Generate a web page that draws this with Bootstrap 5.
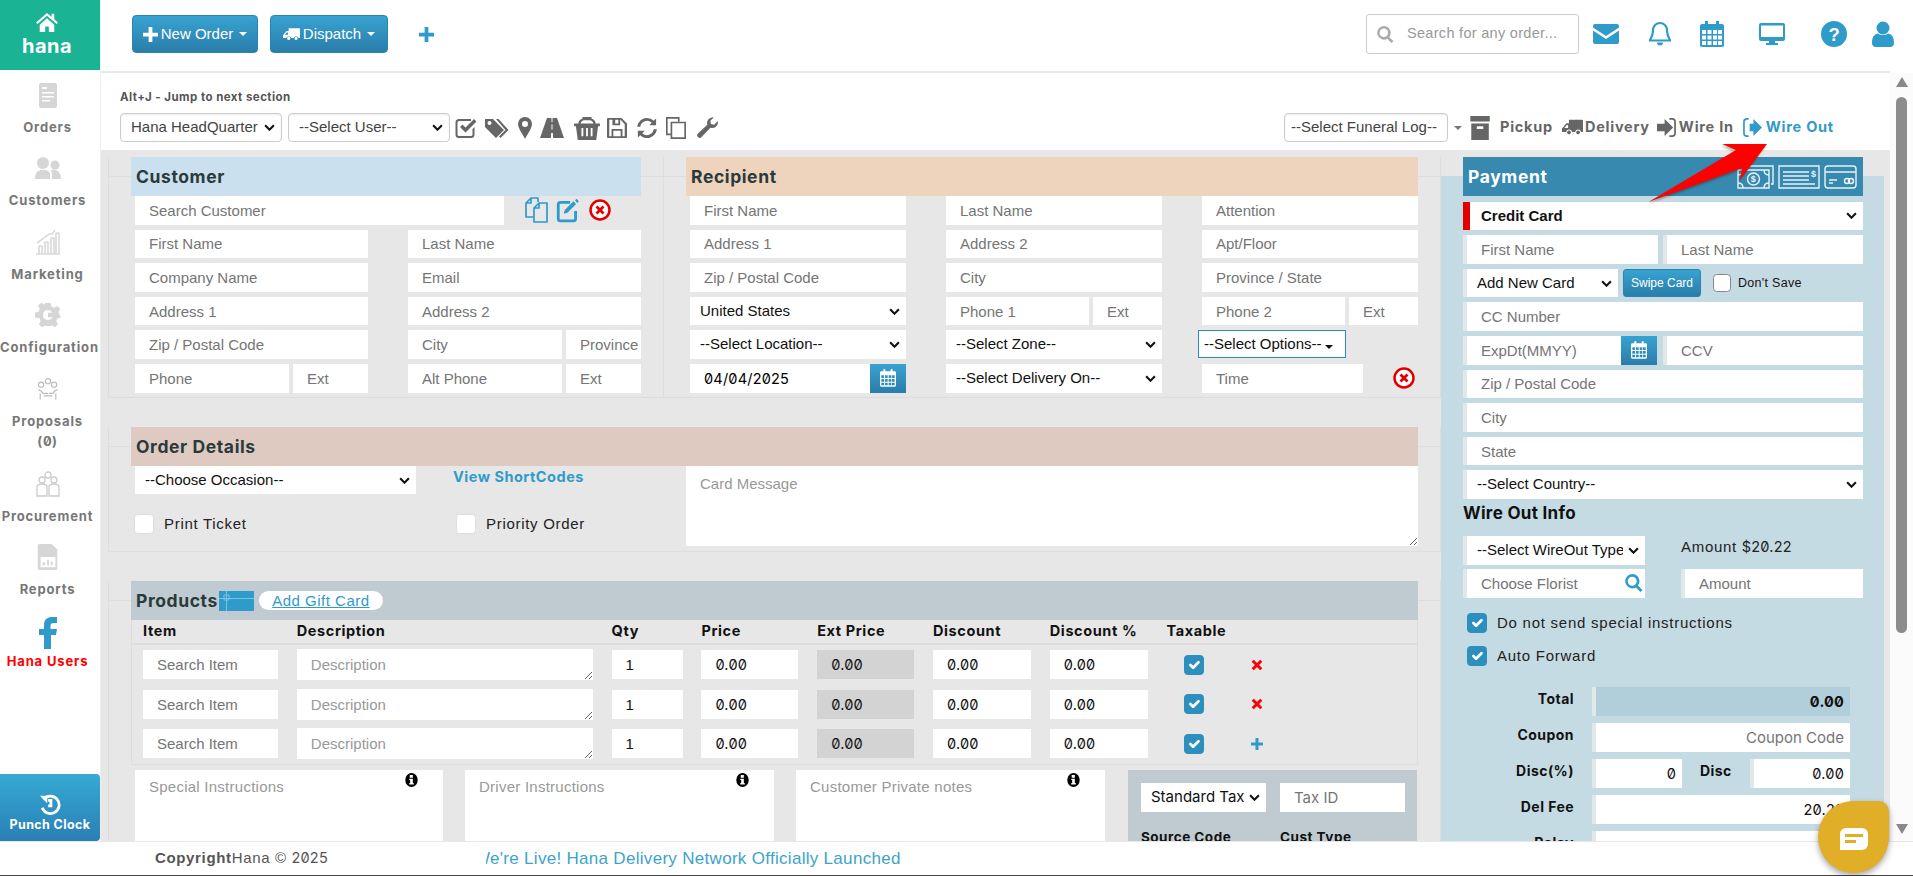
<!DOCTYPE html>
<html lang="en"><head><meta charset="utf-8"><title>Hana</title>
<link href="https://cdn.jsdelivr.net/npm/bootstrap@5.3.0/dist/css/bootstrap.min.css" rel="stylesheet">
<style>
html,body{height:876px;overflow:hidden}
body{font-family:"Liberation Sans",Arial,sans-serif;font-size:15px;letter-spacing:0;color:#222;background:#fff;position:relative}
.shell{height:841px}
.sbar{width:101px;flex:none;border-right:1px solid #eee}
.brand{height:70px;background:#1ab394;color:#fff;font:700 20px/1 Inter,sans-serif;letter-spacing:.5px;padding-top:12px}
.brand svg{width:22px;height:20px;fill:#fff;display:block;margin:0 auto 4px}
.snav{width:95px;text-align:center;font:700 13px/1 Inter,sans-serif;letter-spacing:.85px;color:#777;padding-top:12px}
.brand{width:100px;padding-right:6px}
.sitem{display:block;height:73.4px;white-space:nowrap}
.sitem svg{width:26px;height:26px;display:block;margin:0 auto 10px;fill:#d6d6d6}
.sitem.two{height:95px}
.sitem.fb{color:#f00;height:64px}
.sitem.fb svg{width:24px;height:32px;fill:#2f9bcb;margin-bottom:3px}
.sitem span{display:block;line-height:21px;margin-top:-1px}
.sitem span span{margin:0}
.punch{width:100px;height:67px;margin-top:auto;background:linear-gradient(#35aad4,#2a7fb4);border-radius:0 4px 4px 0;color:#fff;font:700 12.5px/1 Inter,sans-serif;letter-spacing:.4px;text-align:center;padding:9px 0 0;border:0;white-space:nowrap}
.punch:hover{color:#fff}
.punch svg{width:22px;height:24px;display:block;margin:0 auto 2px;fill:none;stroke:#fff;stroke-width:3}
.topb{height:71px;padding:0 8px 3px 31px}
.topline{height:2px;width:1789px;background:#e7eaec}
.tbtn{height:38px;background:linear-gradient(#38a3d2,#2a7da9);border:1px solid #2a84af;border-radius:4px;color:#fff;font-size:15px;letter-spacing:0;padding:0;display:flex;align-items:center;justify-content:center;gap:3px}
.tbtn:hover{color:#fff}
.tbtn svg{width:15px;height:15px;fill:#fff}
.w126{width:126px}.w118{width:118px;margin-left:12px}
.car{display:inline-block;border-top:4px solid currentColor;border-left:4px solid transparent;border-right:4px solid transparent;margin-left:3px}
.plus{width:15px;height:15px;fill:#2f9bcb;margin-left:31px}
.osearch{width:213px;height:40px;margin-left:auto;border:1px solid #ccc;border-radius:3px;padding-left:10px;color:#999;font-size:14.5px;letter-spacing:.3px}
.osearch svg{width:17px;height:17px;fill:#aaa;margin-right:13px}
.ticons{display:grid;grid-template-columns:54px 54px 50px 70px 54px 44px;justify-items:center;align-items:center}
.ticons svg{width:26px;height:26px;fill:#2f9bcb}
.scol{width:23px;flex:none;background:#fbfbfb;padding:4px 6px 7px}
.sthumb{background:#8c8c8c;border-radius:7px;height:536px;margin:10px 0 auto}
.tri-u,.tri-d{display:block;width:0;height:0;border-left:6.5px solid transparent;border-right:6.5px solid transparent}
.tri-u{border-bottom:10px solid #888}.tri-d{border-top:10px solid #888}
.subb{height:77px;padding:18px 0 0 19px}
.altj{font:700 11.5px/13px Inter,sans-serif;color:#555;letter-spacing:.45px;margin-bottom:9px}
.form-select.tsel,.form-select.fs{--bs-form-select-bg-img:url("data:image/svg+xml,%3csvg xmlns='http://www.w3.org/2000/svg' viewBox='0 0 12 8'%3e%3cpath fill='none' stroke='%23111' stroke-width='2.4' d='M1 1.500l5 5 5-5'/%3e%3c/svg%3e");background-size:11px 7px;background-position:right 6px center}
.tsel{height:29px;border:1px solid #ccc;border-radius:4px;padding:0 20px 0 10px;font-size:15px;letter-spacing:0;color:#444;box-shadow:inset 0 1px 2px rgba(0,0,0,.08)}
.form-select.nochev{--bs-form-select-bg-img:none;padding:0 0 0 6px}
.w162{width:162px}.w162b{width:162px;margin-left:6px}
.gi{fill:#666;flex:none}
.tact{font:700 14.5px/1 Inter,sans-serif;color:#666;letter-spacing:.75px;white-space:nowrap}
.tact.on{color:#2f9bcb}
.farea{background:#e7e7e7;height:691px;padding:7px 0 0 7px;overflow:hidden}
.lcol{width:1333px;flex:none}
.paycol{width:443px;flex:none;padding:0 21px 0 22px;background:linear-gradient(transparent 19px,#c5dbe3 19px)}
.sect{border:1px solid #ddd;border-top:0;background:linear-gradient(#ddd,#ddd) top 19px left/100% 1px no-repeat}
.sc{width:555px;height:241px;padding:0 22px;border-right:0}
.sr{width:778px;height:241px;padding:0 22px;}
.sh{height:39px;font:700 17.5px/39px Inter,sans-serif;letter-spacing:.6px;padding-left:5px;color:#2a3a3a}
.hc{background:#cbe0ee}.hr{background:#eed3bd}.ho{background:#dfcac2}.hp{background:#bfcbd0}
.hpay{background:#3789af;color:#fff;margin-bottom:5.6px}
.fg{display:grid;row-gap:5px;padding-left:4px;grid-auto-rows:28.6px}
.g2{grid-template-columns:233px 233px;column-gap:40px}
.g3{grid-template-columns:216px 216px 216px;column-gap:40px}
.s2{grid-column:span 2}
.splt{display:flex;gap:4px;min-width:0}
.splt .fi{min-width:0}
.fi,.fs{border:0;border-radius:0;height:100%;font-size:15px;letter-spacing:0;color:#111;background-color:#fff;box-shadow:none}
.fi{padding:0 0 0 14px}
.fi::placeholder{color:#757575;opacity:1}
.fs{padding:0 22px 0 10px}
.z{font-family:Inter,sans-serif;font-feature-settings:"zero";letter-spacing:.2px;font-size:14.5px}
.optbtn{height:28px;width:148px;margin-left:-4px;background:#fff;border:1px solid #2a8fc0;font-size:15px;letter-spacing:0;color:#111;padding:0 0 0 5px;text-align:left;white-space:nowrap}
.calb{flex:none;background:linear-gradient(#38a3d2,#2a7da9);display:flex;align-items:center;justify-content:center;width:36px}
.calb svg{width:16px;height:18px;fill:#fff}
.ci{width:24px;height:26px}
.c-x{width:22px;height:22px}
.secgap{margin-top:29px}
.so{height:125px;padding:0 22px}
.occ{width:555px;flex:none;padding-left:4px}
.occg{display:grid;grid-template-columns:318px 1fr}
.lnk{font:700 14.5px/1 Inter,sans-serif;color:#2f9bcb;letter-spacing:.5px;padding-top:4px;text-decoration:none;display:block}
.chk{width:20px;height:20px;margin:0 10px 0 -1px;border-radius:3px;border:1px solid #ddd;background-color:#fff;flex:none}
.chk:checked{background-color:#2c8fbe;border-color:#2c8fbe}
.lsp{letter-spacing:.7px;color:#222}
.cmsg{width:732px;height:80px;border:0;border-radius:0;padding:7px 14px;font-size:15px;letter-spacing:0}
.cmsg::placeholder{color:#999;opacity:1}
.sp{padding:0 22px;height:600px;margin-top:29px}
.gcard{width:35px;height:20px;margin-left:1px;flex:none}
.pill{width:124px;height:19px;margin-left:5px;background:#fff;border-radius:10px;text-align:center;color:#2f9bcb;text-decoration:underline;font:400 15px/19px "Liberation Sans",sans-serif;letter-spacing:.5px}
.ptab{border:1px solid #ddd;border-top:0;height:144.5px}
.prow{display:grid;grid-template-columns:135px 296px 71px 97px 97px 98px 98px 60px 24px;column-gap:18.8px;padding-left:11px;align-items:center;height:39.5px}
.phead{height:25px;border-bottom:2px solid #ddd;font:700 14.5px/1 Inter,sans-serif;letter-spacing:.6px;color:#111}
.phead span{white-space:nowrap}
.prow .fi{height:29px}
.prow textarea.fi{height:31px;min-height:0;padding-top:5px;padding-left:14px}
.prow textarea.fi::placeholder{color:#999}
.ext{background:#d3d3d3!important}
.pchk{justify-self:center;margin:0 0 0 -6px}
.ic-s{width:12px;height:12px;margin-left:6px}
.nrow{margin-top:5.5px;padding-left:4px;display:grid;grid-template-columns:308px 309px 309px 290px;column-gap:22px}
.nbox{position:relative;background:#fff;height:120px;padding:6px 14px;color:#999;letter-spacing:.25px}
.nbox svg{position:absolute;right:24px;top:2px;width:15px;height:16px}
.graybox{background:#bfcbd0;height:120px;padding:13px 13px;display:grid;grid-template-columns:125px 125px;column-gap:14px;grid-template-rows:29px 20px;row-gap:19px;font:700 13.5px/1 Inter,sans-serif;letter-spacing:.5px;color:#111;margin-left:1px}
.phd{display:flex;align-items:center;justify-content:space-between;padding-right:6px}
.phd svg{fill:none;stroke:#e8f4f8;stroke-width:1.4}
.phd svg text{fill:#e8f4f8;stroke:none;font:700 9px "Liberation Sans",sans-serif}
.pg{display:grid;grid-auto-rows:28.6px;row-gap:5px;width:400px}
.pf{border-left:4px solid #e2e8ea!important}
.ccs{border-left:7px solid #e50000!important;font-weight:700;padding-left:11px}
.pr2{display:grid;grid-template-columns:195px 200px;column-gap:5px}
.swp{width:78px;height:28px;background:linear-gradient(#38a3d2,#2a7da9);border:1px solid #2a84af;color:#fff;font-size:12px;letter-spacing:0;padding:0;border-radius:3px;margin:0 0 0 5px;flex:none}
.swp:hover{color:#fff}
.chk.pchk2{width:18px;height:18px;margin:0 7px 0 12px;border-color:#888}
.wi{font:700 17px/1 Inter,sans-serif;color:#111;letter-spacing:.3px;padding:6px 0 0;height:37px}
.wg{display:grid;grid-template-columns:182px 182px;column-gap:36px;grid-auto-rows:29px;row-gap:4.5px}
.wsel{width:182px}
.wcb{padding-left:4px;height:32px;color:#222;letter-spacing:.75px}
.wcb .chk{margin:0 10px 0 0}
.totg{display:grid;grid-template-columns:111px 258px;column-gap:18px;grid-auto-rows:29px;row-gap:7px;margin-top:15px;font:700 14px/24px Inter,sans-serif;letter-spacing:.45px;color:#111;text-align:right}
.ti2{padding:0 6px 0 0;text-align:right}
.tot{background:#b1cfda!important;font-weight:700}
.dsplit{display:grid;grid-template-columns:90px 68px 100px;text-align:left}
.dsplit span{padding-left:18px}
.foot{height:35px;border-top:1px solid #e7e7e7;border-bottom:1px solid #444;background:#fff;padding-left:155px;color:#555;letter-spacing:.65px}
.foot b{font-weight:700;color:#555}
.mq{width:440px;overflow:hidden;white-space:nowrap;color:#3da3cb;font-size:17px;letter-spacing:.3px}
.mq span{display:inline-block;margin-left:-12px}
.chatb{position:absolute;left:1818px;top:801px;width:71px;height:72px;background:#e0ae27;border-radius:50% 14% 50% 50%;box-shadow:0 3px 6px rgba(0,0,0,.35);display:flex;align-items:center;justify-content:center}
.chatb svg{width:28px;height:22px;margin-top:4px}
.redarrow{position:absolute;left:1640px;top:138px;width:135px;height:72px}
</style></head>
<body>
<svg width="0" height="0" class="d-none"><defs>
<symbol id="i-home" viewBox="0 0 24 22"><path d="M12 1 0 11.500l1.500 1.700L12 4l10.500 9.200L24 11.500l-4-3.500V2h-3v3.400zM4 14v8h6v-6h4v6h6v-8l-8-7z"/></symbol>
<symbol id="i-plus" viewBox="0 0 16 16"><path d="M6 0h4v6h6v4h-6v6H6v-6H0V6h6z"/></symbol>
<symbol id="i-truck" viewBox="0 0 24 20"><path d="M8 1h15a1 1 0 0 1 1 1v13h-2.200a3.500 3.500 0 0 0-6.800 0H11.500a3.500 3.500 0 0 0-6.800 0H0v-4l5-6h3zM2.500 10.500H7V7H5.500zM5.800 15.500a2.200 2.200 0 1 1 0 .1zM16.200 15.500a2.200 2.200 0 1 1 0 .1z"/></symbol>
<symbol id="i-search" viewBox="0 0 20 20"><path fill-rule="evenodd" d="M8 0a8 8 0 0 1 6.400 12.800l5 5-2.300 2.200-5-5A8 8 0 1 1 8 0zm0 3a5 5 0 1 0 0 10A5 5 0 0 0 8 3z"/></symbol>
<symbol id="i-env" viewBox="0 0 26 22"><path d="M2 1h22a2 2 0 0 1 2 2v1.500L13 13 0 4.500V3a2 2 0 0 1 2-2zM0 7.500 13 16 26 7.500V19a2 2 0 0 1-2 2H2a2 2 0 0 1-2-2z"/></symbol>
<symbol id="i-bell" viewBox="0 0 24 26"><path fill="none" stroke="currentColor" stroke-width="2.200" d="M12 2a7 7 0 0 1 7 7c0 7 3 9 3 10.500H2C2 18 5 16 5 9a7 7 0 0 1 7-7z"/><path d="M9 21.500h6a3 3 0 0 1-6 0z"/></symbol>
<symbol id="i-cal" viewBox="0 0 24 26"><path fill-rule="evenodd" d="M5 0h3v3h8V0h3v3h3a2 2 0 0 1 2 2v19a2 2 0 0 1-2 2H2a2 2 0 0 1-2-2V5a2 2 0 0 1 2-2h3zM2 9v4h4V9zm5.500 0v4h4V9zm5.500 0v4h4V9zm5 0v4h4V9zM2 14.500v4h4v-4zm5.500 0v4h4v-4zm5.500 0v4h4v-4zm5 0v4h4v-4zM2 20v4h4v-4zm5.500 0v4h4v-4zm5.500 0v4h4v-4zm5 0v4h4v-4z"/></symbol>
<symbol id="i-mon" viewBox="0 0 26 24"><path fill-rule="evenodd" d="M2 1h22a2 2 0 0 1 2 2v14a2 2 0 0 1-2 2h-8v2h3v2H7v-2h3v-2H2a2 2 0 0 1-2-2V3a2 2 0 0 1 2-2zm0 2.500V15h22V3.500z"/></symbol>
<symbol id="i-q" viewBox="0 0 24 24"><circle cx="12" cy="12" r="12"/><text x="12" y="18" text-anchor="middle" font-family="Liberation Sans" font-weight="700" font-size="17" fill="#fff">?</text></symbol>
<symbol id="i-user" viewBox="0 0 22 26"><circle cx="11" cy="7" r="6.500"/><path d="M0 22c0-7 3-9 6-9.500 3 2 7 2 10 0 3 .5 6 2.500 6 9.500a4 4 0 0 1-4 4H4a4 4 0 0 1-4-4z"/></symbol>
<symbol id="i-check" viewBox="0 0 22 22"><path d="M4 2h12v2H4a1.500 1.500 0 0 0-1.500 1.500v12A1.500 1.500 0 0 0 4 19h12a1.500 1.500 0 0 0 1.500-1.500V12l2-2v7.500A3.500 3.500 0 0 1 16 21H4a3.500 3.500 0 0 1-3.500-3.500v-12A3.500 3.500 0 0 1 4 2z"/><path d="m5 10 2.500-2.500 3 3L19 2l2.500 2.500-11 11z"/></symbol>
<symbol id="i-tags" viewBox="0 0 24 22"><path fill-rule="evenodd" d="M0 2v8l11 11 8-8L8 2zm4.500 2a2 2 0 1 1 0 4 2 2 0 0 1 0-4z"/><path d="M11 2h2.500l10 11-8 8-1.500-1.500 6.500-6.500z"/></symbol>
<symbol id="i-pin" viewBox="0 0 14 22"><path fill-rule="evenodd" d="M7 0a7 7 0 0 1 7 7c0 4-5 11-7 15C5 18 0 11 0 7a7 7 0 0 1 7-7zm0 4a3 3 0 1 0 0 6 3 3 0 0 0 0-6z"/></symbol>
<symbol id="i-road" viewBox="0 0 24 20"><path fill-rule="evenodd" d="M7 0h4.500v4h1V0H17l7 20h-11v-5h-2v5H0zm4.500 6.500v5h1v-5z"/></symbol>
<symbol id="i-bask" viewBox="0 0 28 26"><path fill-rule="evenodd" d="M9 1h10v2h-1c3 0 5 2 5.500 5H28v3h-2l-2 15H4L2 11H0V8h4.500C5 5 7 3 10 3H9zM7 8h14c-.5-2-2-3.500-4-3.500h-6C9 4.500 7.500 6 7 8zm1 5v9h2v-9zm5 0v9h2v-9zm5 0v9h2v-9z"/></symbol>
<symbol id="i-save" viewBox="0 0 22 24"><path fill-rule="evenodd" d="M2 1h14l6 6v15a1 1 0 0 1-1 1H1a1 1 0 0 1-1-1V2a1 1 0 0 1 1-1zm.500 2v18H5v-8h12v8h2.500V8L15 3h-.5v6H6V3zM7 15v6h8v-6zm2-12v4h3.500V3z"/></symbol>
<symbol id="i-ref" viewBox="0 0 22 22"><path d="M11 0a11 11 0 0 1 7.500 3L21 .5V8h-7.500l2.700-2.700A7.500 7.500 0 0 0 3.600 9.500H.1A11 11 0 0 1 11 0zM.9 14H8.500l-2.700 2.700a7.500 7.500 0 0 0 12.600-4.200h3.500A11 11 0 0 1 3.500 19L1 21.500z"/></symbol>
<symbol id="i-copy" viewBox="0 0 22 24"><path fill="none" stroke="currentColor" stroke-width="1.800" d="M5 19H1V1h13v4M6 6h15v17H6z"/></symbol>
<symbol id="i-wr" viewBox="0 0 22 22"><path d="M22 5.500a6 6 0 0 1-8 5.700L4.800 21a2.600 2.600 0 0 1-3.800-3.800l9.800-9.200A6 6 0 0 1 17.500.4L14 4l.6 3.400 3.400.6 3.500-3.500c.3 0 .5.400.5 1z"/></symbol>
<symbol id="i-box" viewBox="0 0 22 26"><path fill-rule="evenodd" d="M0 0h21v6H0zM1 8h19v18H1zm6 3v3h7v-3z"/></symbol>
<symbol id="i-in" viewBox="0 0 20 20"><path d="M0 6h8V1l9 9-9 9v-5H0z"/><path fill="none" stroke="currentColor" stroke-width="1.800" d="M13 1h3a3 3 0 0 1 3 3v12a3 3 0 0 1-3 3h-3"/></symbol>
<symbol id="i-out" viewBox="0 0 20 20"><path d="M7 6h4V1l9 9-9 9v-5H7z"/><path fill="none" stroke="currentColor" stroke-width="1.800" d="M6 1H4a3 3 0 0 0-3 3v12a3 3 0 0 0 3 3h2"/></symbol>
<symbol id="i-info" viewBox="0 0 16 18"><ellipse cx="8" cy="9" rx="7" ry="8"/><path fill="#fff" d="M6 3.500h3.500v3H6zM5.500 7.500h4v5h1V14h-5v-1.500h1V9h-1z"/></symbol>
<symbol id="i-tick" viewBox="0 0 24 26"><path fill="none" stroke="#2f9bcb" stroke-width="1.700" stroke-linejoin="round" d="M14 5V1H7L2 6v14h8M7 1v5H2M15 6h8v19H10V11zM15 6v5h-5"/></symbol>
</defs></svg>

<div class="shell d-flex">
 <aside class="sbar d-flex flex-column">
  <div class="brand text-center"><svg><use href="#i-home"/></svg>hana</div>
  <nav class="snav">
   <a class="sitem text-reset text-decoration-none"><svg viewBox="0 0 24 26"><path fill-rule="evenodd" d="M5 1h14a2 2 0 0 1 2 2v21a2 2 0 0 1-2 2H5a2 2 0 0 1-2-2V3a2 2 0 0 1 2-2zm1 4v2h5V5zm0 5v1.500h12V10zm0 4v1.500h12V14zm0 4v1.500h8V18z"/></svg><span>Orders</span></a>
   <a class="sitem text-reset text-decoration-none"><svg viewBox="0 0 26 24"><circle cx="8" cy="7" r="6"/><circle cx="20" cy="9" r="4.500"/><path d="M0 23c0-7 3-9 8-9s7 2 7 4v5zM17 23v-6c0-1-1-2-1.500-2.500C20 12.500 26 15 26 23z"/></svg><span>Customers</span></a>
   <a class="sitem text-reset text-decoration-none"><svg viewBox="0 0 26 26" style="fill:none;stroke:#ccc;stroke-width:1.200"><path d="M1 25h24M4 25V17h3v8M10 25V13h3v12M16 25V9h3v16M21 25V4h3v21M2 14 14 5l3 0 3-4"/></svg><span>Marketing</span></a>
   <a class="sitem text-reset text-decoration-none"><svg viewBox="0 0 26 26"><path fill-rule="evenodd" d="M10.500 1h5l.8 3.500 3 1.300 3-1.800 3 3-1.800 3 1.300 3L26 15.500l-3.500.8-1.300 3 1.800 3-3 3-3-1.800-1.300.5h-5l-.8-.5-3 1.800-3-3 1.800-3-1.300-3L0 15.500v-5l3.500-.8 1.300-3-1.800-3 3-3 3 1.800zM13 8a5 5 0 1 0 4.500 7.200H13v-4.400h4.500A5 5 0 0 0 13 8z"/></svg><span>Configuration</span></a>
   <a class="sitem two text-reset text-decoration-none"><svg viewBox="0 0 30 26" style="fill:none;stroke:#bbb;stroke-width:1.300"><circle cx="7" cy="8" r="3"/><circle cx="15" cy="4" r="3"/><circle cx="22" cy="8" r="3"/><path d="M4 14c2 0 4 2 5 4h6M26 14c-2 0-4 2-5 4h-5M6 18v7M24 18v7M10 21h10"/></svg><span>Proposals</span><span>(<span class="d-inline z" style="font-size:13px">0</span>)</span></a>
   <a class="sitem text-reset text-decoration-none"><svg viewBox="0 0 26 26" style="fill:none;stroke:#ccc;stroke-width:1.300"><circle cx="7" cy="9" r="3"/><circle cx="19" cy="9" r="3"/><circle cx="13" cy="4" r="3"/><path d="M2 25V16c0-2 2-3 5-3s5 1 5 3v9zM14 25V16c0-2 2-3 5-3s5 1 5 3v9z"/></svg><span>Procurement</span></a>
   <a class="sitem text-reset text-decoration-none"><svg viewBox="0 0 24 28"><path fill-rule="evenodd" d="M3 0h13l6 6v20a2 2 0 0 1-2 2H3a2 2 0 0 1-2-2V2a2 2 0 0 1 2-2zm1 14v11h16V14z"/><path d="M6 20h3v3H6zM11 17h2v6h-2zM15 19h2v4h-2z"/></svg><span>Reports</span></a>
   <a class="sitem fb text-decoration-none"><svg viewBox="0 0 24 32"><path d="M8 32V18H3v-6h5V8c0-5 3-8 8-8h5v6h-3c-3 0-3.500 1-3.500 3v3H21l-1 6h-5v14z"/></svg><span>Hana Users</span></a>
  </nav>
  <button class="punch btn"><svg viewBox="0 0 24 24"><path d="M5 6a9.500 9.500 0 1 1-1.500 9"/><path fill="#fff" stroke="none" d="M1 2h8v8z"/><path d="M10 7h3v6h-3"/></svg>Punch Clock</button>
 </aside>
 <div class="flex-grow-1 d-flex flex-column" style="min-width:0">
  <header class="topb d-flex align-items-center">
   <button class="btn tbtn w126"><svg><use href="#i-plus"/></svg>New Order<i class="car"></i></button>
   <button class="btn tbtn w118"><svg style="width:17px"><use href="#i-truck"/></svg> Dispatch<i class="car"></i></button>
   <svg class="plus"><use href="#i-plus"/></svg>
   <div class="osearch d-flex align-items-center"><svg><use href="#i-search"/></svg>Search for any order...</div>
   <div class="ticons" style="color:#2f9bcb">
    <svg><use href="#i-env"/></svg><svg><use href="#i-bell"/></svg><svg><use href="#i-cal"/></svg><svg><use href="#i-mon"/></svg><svg><use href="#i-q"/></svg><svg><use href="#i-user"/></svg>
   </div>
  </header>
  <div class="topline"></div>
  <div class="d-flex flex-grow-1" style="min-height:0">
   <main class="flex-grow-1" style="min-width:0">
    <section class="subb">
     <div class="altj">Alt+J - Jump to next section</div>
     <div class="d-flex align-items-center" style="color:#666">
      <select class="form-select tsel w162"><option>Hana HeadQuarter</option></select>
      <select class="form-select tsel w162b"><option>--Select User--</option></select>
      <svg class="gi" style="width:22px;height:22px;margin-left:5px"><use href="#i-check"/></svg>
      <svg class="gi" style="width:24px;height:22px;margin-left:8px"><use href="#i-tags"/></svg>
      <svg class="gi" style="width:14px;height:22px;margin-left:9px"><use href="#i-pin"/></svg>
      <svg class="gi" style="width:24px;height:20px;margin-left:8px"><use href="#i-road"/></svg>
      <svg class="gi" style="width:26px;height:24px;margin-left:10px"><use href="#i-bask"/></svg>
      <svg class="gi" style="width:20px;height:22px;margin-left:7px"><use href="#i-save"/></svg>
      <svg class="gi" style="width:20px;height:20px;margin-left:10px"><use href="#i-ref"/></svg>
      <svg class="gi" style="width:22px;height:22px;margin-left:8px"><use href="#i-copy"/></svg>
      <svg class="gi" style="width:21px;height:21px;margin-left:10px"><use href="#i-wr"/></svg>
      <select class="form-select tsel nochev" style="width:164px;margin-left:566px"><option>--Select Funeral Log--</option></select>
      <i class="car" style="margin-left:6px;color:#777"></i>
      <svg class="gi" style="width:21px;height:24px;margin-left:8px"><use href="#i-box"/></svg>
      <span class="tact" style="margin-left:9px">Pickup</span>
      <svg class="gi" style="width:21px;height:19px;margin-left:9px"><use href="#i-truck"/></svg>
      <span class="tact" style="margin-left:2px">Delivery</span>
      <svg class="gi" style="width:19px;height:19px;margin-left:7px"><use href="#i-in"/></svg>
      <span class="tact" style="margin-left:3px">Wire In</span>
      <svg class="gi" style="width:19px;height:19px;margin-left:9px;fill:#2f9bcb;color:#2f9bcb"><use href="#i-out"/></svg>
      <span class="tact on" style="margin-left:4px">Wire Out</span>
     </div>
    </section>
    <section class="farea d-flex">
     <div class="lcol">
      <div class="d-flex">
       <div class="sect sc">
        <div class="sh hc">Customer</div>
        <div class="fg g2">
         <div class="s2 d-flex align-items-center"><input class="form-control fi" style="width:369px" placeholder="Search Customer">
          <svg class="ci" style="margin-left:20px;color:#2f9bcb"><use href="#i-tick"/></svg>
          <svg class="ci" viewBox="0 0 22 24" style="margin-left:8px"><path fill="none" stroke="#2f9bcb" stroke-width="2.600" d="M18 13v7a2 2 0 0 1-2 2H4a2 2 0 0 1-2-2V7a2 2 0 0 1 2-2h9"/><path fill="#2f9bcb" d="m8 12 8-8 2.500 2.500-8 8-3.500 1zM17.500 3l1.500-1.500L21 4l-1.500 1.500z"/></svg>
          <svg class="c-x" viewBox="0 0 22 22" style="margin-left:9px"><circle cx="11" cy="11" r="9.500" fill="#fff" stroke="#e00000" stroke-width="2.500"/><path stroke="#e00000" stroke-width="2.800" d="m7.500 7.500 7 7m0-7-7 7"/></svg></div>
         <input class="form-control fi" placeholder="First Name"><input class="form-control fi" placeholder="Last Name">
         <input class="form-control fi" placeholder="Company Name"><input class="form-control fi" placeholder="Email">
         <input class="form-control fi" placeholder="Address 1"><input class="form-control fi" placeholder="Address 2">
         <input class="form-control fi" placeholder="Zip / Postal Code">
         <div class="splt"><input class="form-control fi" style="width:154px" placeholder="City"><input class="form-control fi" style="width:75px" placeholder="Province"></div>
         <div class="splt"><input class="form-control fi" style="width:154px" placeholder="Phone"><input class="form-control fi" style="width:75px" placeholder="Ext"></div>
         <div class="splt"><input class="form-control fi" style="width:154px" placeholder="Alt Phone"><input class="form-control fi" style="width:75px" placeholder="Ext"></div>
        </div>
       </div>
       <div class="sect sr">
        <div class="sh hr">Recipient</div>
        <div class="fg g3">
         <input class="form-control fi" placeholder="First Name"><input class="form-control fi" placeholder="Last Name"><input class="form-control fi" placeholder="Attention">
         <input class="form-control fi" placeholder="Address 1"><input class="form-control fi" placeholder="Address 2"><input class="form-control fi" placeholder="Apt/Floor">
         <input class="form-control fi" placeholder="Zip / Postal Code"><input class="form-control fi" placeholder="City"><input class="form-control fi" placeholder="Province / State">
         <select class="form-select fs"><option>United States</option></select>
         <div class="splt"><input class="form-control fi" style="width:143px" placeholder="Phone 1"><input class="form-control fi" style="width:69px" placeholder="Ext"></div>
         <div class="splt"><input class="form-control fi" style="width:143px" placeholder="Phone 2"><input class="form-control fi" style="width:69px" placeholder="Ext"></div>
         <select class="form-select fs"><option>--Select Location--</option></select>
         <select class="form-select fs"><option>--Select Zone--</option></select>
         <button class="optbtn">--Select Options--<i class="car"></i></button>
         <div class="d-flex"><input class="form-control fi z" style="width:180px;color:#000" value="04/04/2025"><span class="calb"><svg><use href="#i-cal"/></svg></span></div>
         <select class="form-select fs"><option>--Select Delivery On--</option></select>
         <div class="d-flex align-items-center"><input class="form-control fi" style="width:161px" placeholder="Time"><svg class="c-x" viewBox="0 0 22 22" style="margin-left:30px"><circle cx="11" cy="11" r="9.500" fill="#fff" stroke="#e00000" stroke-width="2.500"/><path stroke="#e00000" stroke-width="2.800" d="m7.500 7.500 7 7m0-7-7 7"/></svg></div>
        </div>
       </div>
      </div>
      <div class="sect so secgap">
       <div class="sh ho">Order Details</div>
       <div class="d-flex">
        <div class="occ">
         <div class="occg">
          <select class="form-select fs" style="width:281px;height:28px"><option>--Choose Occasion--</option></select>
          <a class="lnk">View ShortCodes</a>
         </div>
         <div class="occg" style="margin-top:19px">
          <div class="d-flex align-items-center"><input type="checkbox" class="form-check-input chk mt-0"><span class="lsp">Print Ticket</span></div>
          <div class="d-flex align-items-center" style="padding-left:4px"><input type="checkbox" class="form-check-input chk mt-0"><span class="lsp">Priority Order</span></div>
         </div>
        </div>
        <textarea class="form-control cmsg" placeholder="Card Message"></textarea>
       </div>
      </div>
      <div class="sect sp">
       <div class="sh hp d-flex align-items-center">Products
        <svg class="gcard" viewBox="0 0 35 20"><rect width="35" height="20" fill="#2f9bcb"/><path stroke="#7cc2df" fill="none" d="M0 7.500h35M7.500 0v20M5 4h5v5H5z"/></svg>
        <a class="pill">Add Gift Card</a></div>
       <div class="ptab">
        <div class="prow phead"><span>Item</span><span>Description</span><span>Qty</span><span>Price</span><span>Ext Price</span><span>Discount</span><span>Discount %</span><span>Taxable</span><span></span></div>
        <div class="prow"><input class="form-control fi" placeholder="Search Item"><textarea class="form-control fi" placeholder="Description"></textarea><input class="form-control fi" value="1"><input class="form-control fi z" value="0.00"><input class="form-control fi z ext" value="0.00"><input class="form-control fi z" value="0.00"><input class="form-control fi z" value="0.00"><input type="checkbox" checked class="form-check-input chk pchk mt-0"><svg class="ic-s" viewBox="0 0 14 14"><path stroke="#f00" stroke-width="3.500" d="m2 2 10 10m0-10L2 12"/></svg></div>
        <div class="prow"><input class="form-control fi" placeholder="Search Item"><textarea class="form-control fi" placeholder="Description"></textarea><input class="form-control fi" value="1"><input class="form-control fi z" value="0.00"><input class="form-control fi z ext" value="0.00"><input class="form-control fi z" value="0.00"><input class="form-control fi z" value="0.00"><input type="checkbox" checked class="form-check-input chk pchk mt-0"><svg class="ic-s" viewBox="0 0 14 14"><path stroke="#f00" stroke-width="3.500" d="m2 2 10 10m0-10L2 12"/></svg></div>
        <div class="prow"><input class="form-control fi" placeholder="Search Item"><textarea class="form-control fi" placeholder="Description"></textarea><input class="form-control fi" value="1"><input class="form-control fi z" value="0.00"><input class="form-control fi z ext" value="0.00"><input class="form-control fi z" value="0.00"><input class="form-control fi z" value="0.00"><input type="checkbox" checked class="form-check-input chk pchk mt-0"><svg class="ic-s" viewBox="0 0 16 16" fill="#2f9bcb"><use href="#i-plus"/></svg></div>
       </div>
       <div class="nrow">
        <div class="nbox">Special Instructions<svg><use href="#i-info"/></svg></div>
        <div class="nbox">Driver Instructions<svg><use href="#i-info"/></svg></div>
        <div class="nbox">Customer Private notes<svg><use href="#i-info"/></svg></div>
        <div class="graybox"><select class="form-select fs"><option>Standard Tax</option></select><input class="form-control fi" placeholder="Tax ID"><span>Source Code</span><span>Cust Type</span></div>
       </div>
      </div>
     </div>
     <aside class="paycol">
      <div class="sh hpay phd"><span>Payment</span>
       <span class="d-flex gap-1" style="margin-top:1px">
        <svg width="37" height="24" viewBox="0 0 37 24"><path d="M5 1h31v18h-2M1 5h31v18H1zM1 10c3 0 5-2 5-5M32 10c-3 0-5-2-5-5M1 18c3 0 5 2 5 5M32 18c-3 0-5 2-5 5"/><circle cx="16.500" cy="14" r="6"/><text x="16.500" y="17.200" text-anchor="middle">$</text></svg>
        <svg width="42" height="24" viewBox="0 0 42 24"><path d="M1 1h40v22H1zM5 7h26M5 11h26M5 15h26M5 19h32"/><text x="33" y="12">$</text></svg>
        <svg width="33" height="24" viewBox="0 0 33 24"><rect x="1" y="1" width="31" height="22" rx="3"/><path d="M1 7h31M5 15h8M5 18h4"/><circle cx="23" cy="16" r="2.500"/><circle cx="27" cy="16" r="2.500"/></svg>
       </span></div>
      <div class="pg">
       <select class="form-select fs ccs"><option>Credit Card</option></select>
       <div class="pr2"><input class="form-control fi pf" placeholder="First Name"><input class="form-control fi pf" placeholder="Last Name"></div>
       <div class="d-flex align-items-center"><select class="form-select fs pf" style="width:155px;color:#111"><option>Add New Card</option></select><button class="swp btn">Swipe Card</button><input type="checkbox" class="form-check-input chk pchk2 mt-0"><span style="font-size:12.500px;letter-spacing:.3px;color:#111">Don't Save</span></div>
       <input class="form-control fi pf" placeholder="CC Number">
       <div class="pr2"><div class="d-flex"><input class="form-control fi pf" style="width:158px" placeholder="ExpDt(MMYY)"><span class="calb"><svg><use href="#i-cal"/></svg></span></div><input class="form-control fi pf" placeholder="CCV"></div>
       <input class="form-control fi pf" placeholder="Zip / Postal Code">
       <input class="form-control fi pf" placeholder="City">
       <input class="form-control fi pf" placeholder="State">
       <select class="form-select fs pf"><option>--Select Country--</option></select>
      </div>
      <div class="wi">Wire Out Info</div>
      <div class="wg">
       <select class="form-select fs pf wsel"><option>--Select WireOut Type--</option></select>
       <span class="lsp" style="line-height:22px">Amount <span class="z">$20.22</span></span>
       <div class="position-relative"><input class="form-control fi pf" placeholder="Choose Florist"><svg class="position-absolute" style="right:2px;top:5px;width:18px;height:18px;fill:#2f9bcb"><use href="#i-search"/></svg></div>
       <input class="form-control fi pf" placeholder="Amount">
      </div>
      <div class="wcb d-flex align-items-center" style="margin-top:9px"><input type="checkbox" checked class="form-check-input chk mt-0"><span>Do not send special instructions</span></div>
      <div class="wcb d-flex align-items-center" style="margin-top:.5px"><input type="checkbox" checked class="form-check-input chk mt-0"><span>Auto Forward</span></div>
      <div class="totg">
       <span>Total</span><input class="form-control fi ti2 pf tot z" value="0.00">
       <span>Coupon</span><input class="form-control fi ti2 pf" placeholder="Coupon Code">
       <span>Disc(%)</span><div class="dsplit"><input class="form-control fi ti2 pf z" value="0"><span>Disc</span><input class="form-control fi ti2 pf z" value="0.00"></div>
       <span>Del Fee</span><input class="form-control fi ti2 pf z" value="20.22">
       <span>Relay</span><input class="form-control fi ti2 pf z" value="">
      </div>
     </aside>
    </section>
   </main>
   <div class="scol d-flex flex-column align-items-center">
    <i class="tri-u"></i><div class="sthumb w-100"></div><i class="tri-d" style="margin-top:auto"></i>
   </div>
  </div>
 </div>
</div>
<footer class="foot d-flex align-items-center">
 <span style="width:331px"><b>Copyright</b>Hana © <span class="z">2025</span></span>
 <div class="mq"><span>We're Live! Hana Delivery Network Officially Launched</span></div>
</footer>
<svg class="redarrow" viewBox="0 0 135 72"><path fill="#f00" d="M8.500 64 96 12 82 6h45l-27 36 2-12z" style="filter:drop-shadow(-1px 2px 1px rgba(0,0,0,.3))"/></svg>
<div class="chatb"><svg viewBox="0 0 28 22"><path fill="#fff" d="M6 0h16a6 6 0 0 1 6 6v10a6 6 0 0 1-6 6H0V6a6 6 0 0 1 6-6z"/><path fill="#e0ae27" d="M5 6h18v3H5zM5 12h11v3H5z"/></svg></div>
<script src="https://cdn.jsdelivr.net/npm/bootstrap@5.3.0/dist/js/bootstrap.bundle.min.js"></script>
</body></html>
